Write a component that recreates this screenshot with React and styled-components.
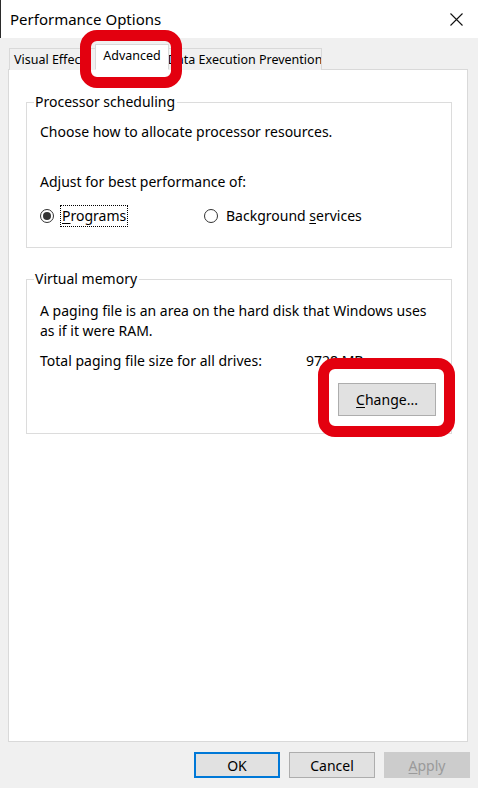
import styled, { createGlobalStyle } from "styled-components";

const GlobalStyle = createGlobalStyle`
  html, body {
    margin: 0;
    padding: 0;
    background: #f0f0f0;
  }

  body {
    font-family: "Noto Sans", "Open Sans", sans-serif;
    color: #000;
  }
`;

const Window = styled.div`
  position: relative;
  width: 478px;
  height: 788px;
  display: flex;
  flex-direction: column;
  background: #f0f0f0;
  overflow: hidden;
`;

const TitleBar = styled.div`
  height: 38px;
  display: flex;
  align-items: center;
  justify-content: space-between;
  background: #fff;
  border-left: 1px solid #2b2b2b;
  padding: 0 15px 0 9px;
  box-sizing: border-box;
  font-size: 15px;
`;

const CloseButton = styled.div`
  width: 14px;
  height: 14px;
  display: flex;
  align-items: center;
  justify-content: center;
`;

const Body = styled.div`
  flex: 1;
  display: flex;
  flex-direction: column;
  padding: 6px 10px 10px 8px;
`;

const TabRow = styled.div`
  display: flex;
  align-items: flex-end;
  height: 26px;
  padding-left: 1px;
  position: relative;
  z-index: 1;
`;

const Tab = styled.div`
  width: ${(p) => p.$width}px;
  height: ${(p) => (p.$active ? "26px" : "22px")};
  box-sizing: border-box;
  margin: ${(p) => (p.$active ? "0 -1px" : "0")};
  display: flex;
  align-items: center;
  justify-content: center;
  white-space: nowrap;
  overflow: hidden;
  font-size: 12.5px;
  background: ${(p) => (p.$active ? "#fff" : "#f0f0f0")};
  border: 1px solid #d9d9d9;
  border-bottom: ${(p) => (p.$active ? "1px solid #fff" : "none")};
  position: relative;
  z-index: ${(p) => (p.$active ? 2 : 1)};
  padding-bottom: ${(p) => (p.$active ? "4px" : "0")};
`;

const Panel = styled.div`
  flex: 1;
  margin-top: -1px;
  background: #fff;
  border: 1px solid #d9d9d9;
  padding: 22px 15px 0 17px;
  display: flex;
  flex-direction: column;
  gap: 21px;
`;

const GroupBox = styled.fieldset`
  margin: 0;
  border: 1px solid #dcdcdc;
  padding: 0 10px ${(p) => p.$bottom}px 13px;
  min-height: ${(p) => p.$height}px;
  box-sizing: border-box;
  display: flex;
  flex-direction: column;
`;

const Legend = styled.legend`
  margin-left: -6px;
  padding: 0 2px 0 1px;
  font-size: 14px;
  line-height: 20px;
`;

const Text = styled.div`
  font-size: 14px;
  line-height: 20px;
  white-space: nowrap;
  margin-top: ${(p) => p.$top || 0}px;
`;

const RadioRow = styled.div`
  display: flex;
  align-items: center;
  margin-top: 13px;
  height: 22px;
`;

const RadioOption = styled.label`
  display: flex;
  align-items: center;
  gap: 6px;
  width: ${(p) => p.$width || "auto"};
  font-size: 14px;
`;

const RadioCircle = styled.span`
  width: 14px;
  height: 14px;
  border: 1px solid #333;
  border-radius: 50%;
  box-sizing: border-box;
  display: flex;
  align-items: center;
  justify-content: center;

  &::after {
    content: "";
    width: 8px;
    height: 8px;
    border-radius: 50%;
    background: ${(p) => (p.$checked ? "#333" : "transparent")};
  }
`;

const RadioLabel = styled.span`
  line-height: 20px;
  padding: 0 1px;
  border: 1px dotted ${(p) => (p.$focused ? "#000" : "transparent")};
`;

const Key = styled.span`
  text-decoration: underline;
  text-underline-offset: 2px;
`;

const SizeRow = styled.div`
  display: flex;
  font-size: 14px;
  line-height: 20px;
  margin-top: 10px;
  white-space: nowrap;
`;

const SizeLabel = styled.span`
  width: 266px;
`;

const ButtonRow = styled.div`
  display: flex;
  justify-content: flex-end;
  gap: 9px;
  margin-top: 10px;
  margin-right: -2px;
`;

const Button = styled.div`
  width: ${(p) => p.$width || 86}px;
  height: ${(p) => p.$height || 26}px;
  box-sizing: border-box;
  display: flex;
  align-items: center;
  justify-content: center;
  font-size: 14px;
  background: ${(p) => (p.$disabled ? "#cccccc" : "#e1e1e1")};
  color: ${(p) => (p.$disabled ? "#9a9a9a" : "#000")};
  border: ${(p) =>
    p.$default ? "2px solid #0078d7" : p.$disabled ? "1px solid #cccccc" : "1px solid #adadad"};
`;

const ChangeRow = styled.div`
  display: flex;
  justify-content: flex-end;
  margin-top: 12px;
  margin-right: 5px;
`;

const Highlight = styled.div`
  position: absolute;
  left: ${(p) => p.$x}px;
  top: ${(p) => p.$y}px;
  width: ${(p) => p.$w}px;
  height: ${(p) => p.$h}px;
  box-sizing: border-box;
  border: 11px solid #e3000f;
  border-radius: 17px;
  pointer-events: none;
  z-index: 5;
`;

export default function App() {
  return (
    <>
      <GlobalStyle />
      <Window>
        <TitleBar>
          <span>Performance Options</span>
          <CloseButton>
            <svg width="13" height="13" viewBox="0 0 13 13">
              <path d="M0.5 0.5 L12.5 12.5 M12.5 0.5 L0.5 12.5" stroke="#111" strokeWidth="1.1" />
            </svg>
          </CloseButton>
        </TitleBar>

        <Body>
          <TabRow>
            <Tab $width={87}>Visual Effects</Tab>
            <Tab $width={74} $active>Advanced</Tab>
            <Tab $width={154}>Data Execution Prevention</Tab>
          </TabRow>

          <Panel>
            <GroupBox $height={148} $bottom={20}>
              <Legend>Processor scheduling</Legend>
              <Text $top={10}>Choose how to allocate processor resources.</Text>
              <Text $top={30}>Adjust for best performance of:</Text>
              <RadioRow>
                <RadioOption $width="164px">
                  <RadioCircle $checked />
                  <RadioLabel $focused>
                    <Key>P</Key>rograms
                  </RadioLabel>
                </RadioOption>
                <RadioOption>
                  <RadioCircle />
                  <RadioLabel>
                    Background <Key>s</Key>ervices
                  </RadioLabel>
                </RadioOption>
              </RadioRow>
            </GroupBox>

            <GroupBox $height={154} $bottom={17}>
              <Legend>Virtual memory</Legend>
              <Text $top={12}>
                A paging file is an area on the hard disk that Windows uses
                <br />
                as if it were RAM.
              </Text>
              <SizeRow>
                <SizeLabel>Total paging file size for all drives:</SizeLabel>
                <span>9728 MB</span>
              </SizeRow>
              <ChangeRow>
                <Button $width={98} $height={33}>
                  <span>
                    <Key>C</Key>hange...
                  </span>
                </Button>
              </ChangeRow>
            </GroupBox>
          </Panel>

          <ButtonRow>
            <Button $default>OK</Button>
            <Button>Cancel</Button>
            <Button $disabled>
              <span>
                <Key>A</Key>pply
              </span>
            </Button>
          </ButtonRow>
        </Body>

        <Highlight $x={80} $y={30} $w={102} $h={58} />
        <Highlight $x={318} $y={358} $w={137} $h={79} />
      </Window>
    </>
  );
}
